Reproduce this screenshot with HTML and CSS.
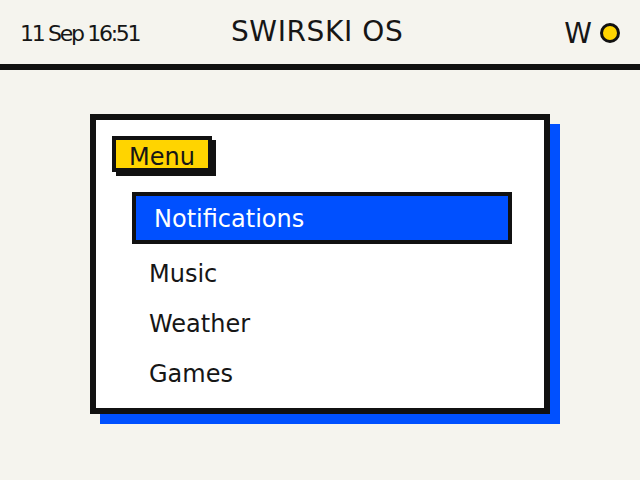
FILE: index.html
```html
<!DOCTYPE html>
<html lang="en">
<head>
<meta charset="utf-8">
<title>SWIRSKI OS</title>
<link rel="stylesheet" href="styles.css">
</head>
<body>
<header class="topbar">
  <div class="clock">11 Sep 16:51</div>
  <div class="title">SWIRSKI OS</div>
  <div class="status">
    <span class="status-letter">W</span>
    <span class="status-dot"></span>
  </div>
</header>
<main class="screen">
  <section class="panel">
    <div class="panel-label">Menu</div>
    <ul class="menu">
      <li class="menu-item is-selected">Notifications</li>
      <li class="menu-item">Music</li>
      <li class="menu-item">Weather</li>
      <li class="menu-item">Games</li>
    </ul>
  </section>
</main>
</body>
</html>
```
FILE: styles.css
```css
html, body {
  margin: 0;
  padding: 0;
}
body {
  width: 640px;
  height: 480px;
  overflow: hidden;
  background: #f5f4ee;
  color: #161616;
  font-family: "DejaVu Sans", "Noto Sans", sans-serif;
}
.topbar {
  display: grid;
  grid-template-columns: 211px auto 1fr;
  align-items: baseline;
  height: 64px;
  padding: 0 20px;
  border-bottom: 6px solid #111;
}
.clock {
  font-size: 22px;
  letter-spacing: -2.3px;
  line-height: 64px;
}
.title {
  font-size: 28px;
  line-height: 64px;
  letter-spacing: 0.6px;
}
.status {
  justify-self: end;
  align-self: center;
  display: flex;
  align-items: center;
  gap: 8px;
}
.status-letter {
  font-size: 28px;
  line-height: 32px;
  position: relative;
  top: 1px;
}
.status-dot {
  width: 14px;
  height: 14px;
  border: 3px solid #111;
  border-radius: 50%;
  background: #ffd400;
}
.screen {
  padding: 44px 0 0 90px;
}
.panel {
  box-sizing: border-box;
  width: 460px;
  height: 300px;
  background: #fff;
  border: 6px solid #111;
  box-shadow: 10px 10px 0 #0050ff;
  padding: 16px;
}
.panel-label {
  display: inline-block;
  box-sizing: border-box;
  width: 100px;
  height: 36px;
  padding: 6px 0 0 13px;
  background: #ffd400;
  border: 4px solid #111;
  box-shadow: 4px 4px 0 #111;
  font-size: 24px;
  line-height: 22px;
  overflow: hidden;
  vertical-align: top;
}
.menu {
  list-style: none;
  margin: 20px 16px 0 20px;
  padding: 0;
}
.menu-item {
  height: 50px;
  line-height: 50px;
  padding-left: 17px;
  font-size: 24px;
}
.menu-item.is-selected {
  box-sizing: border-box;
  height: 52px;
  padding: 2px 0 0 18px;
  line-height: 42px;
  border: 4px solid #111;
  background: #0050ff;
  color: #fff;
  margin-bottom: 5px;
}
```
